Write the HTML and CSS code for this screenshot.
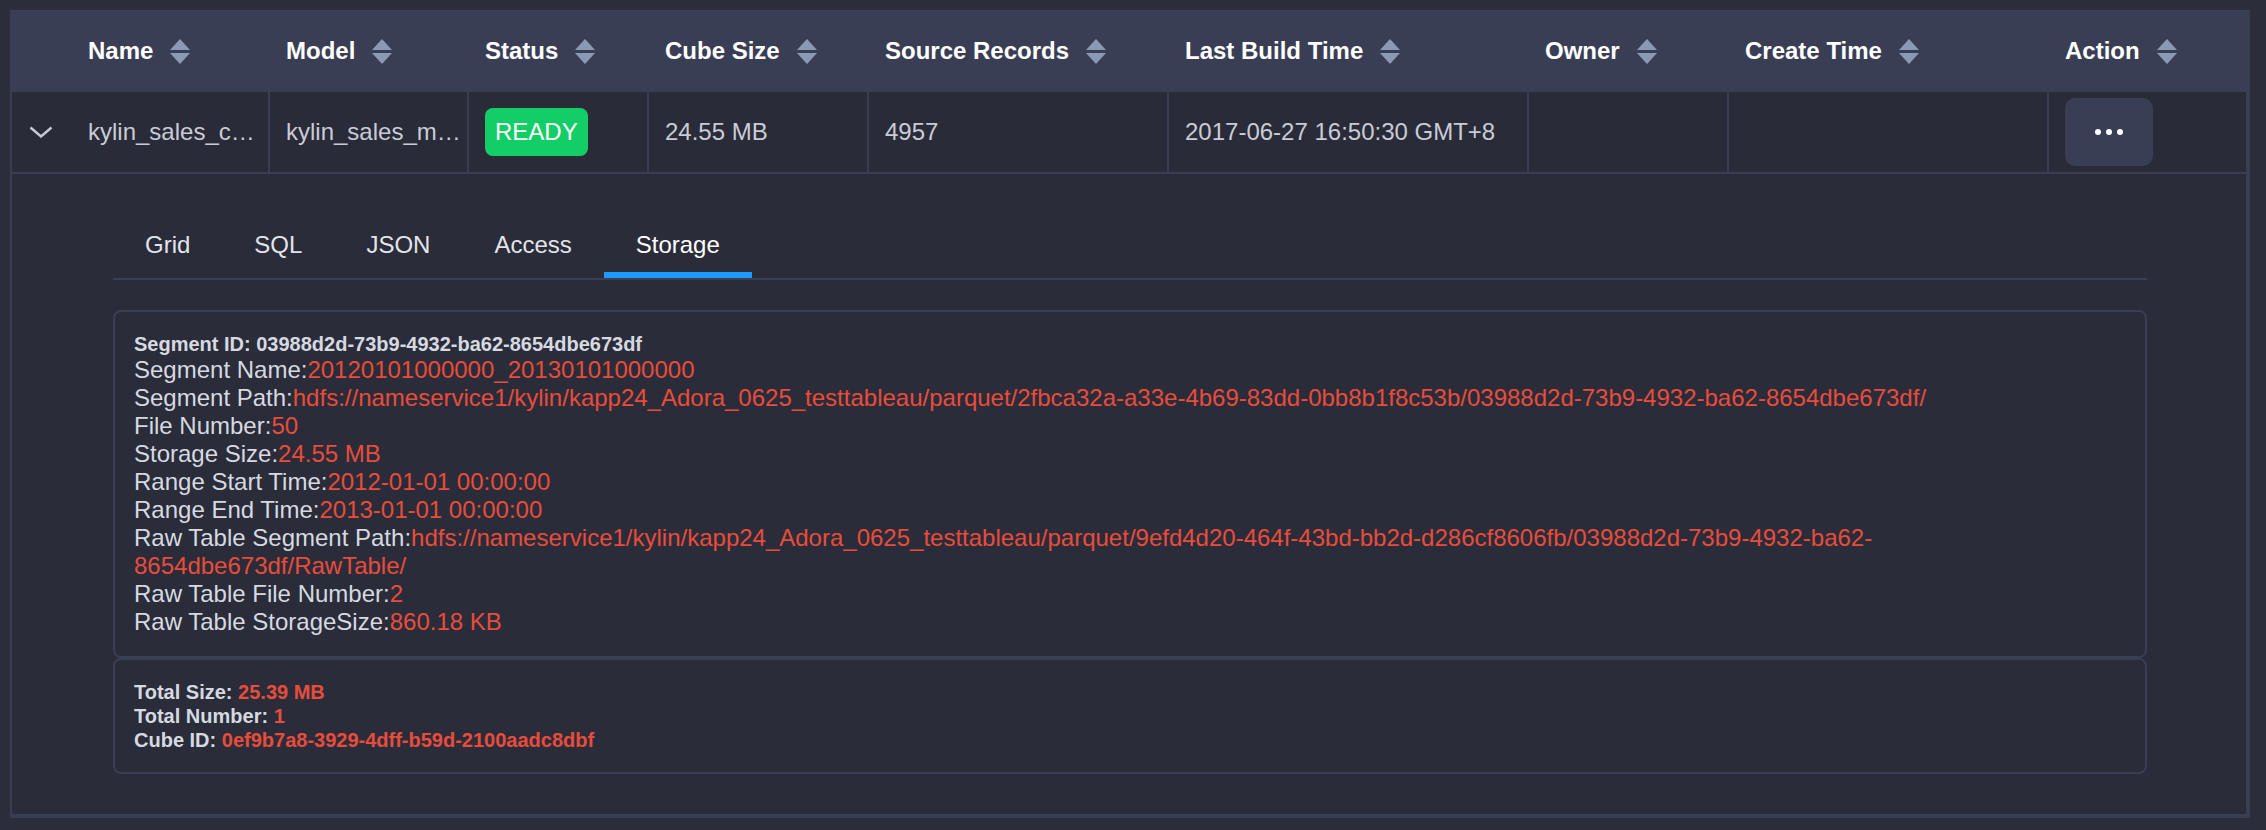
FILE: index.html
```html
<!DOCTYPE html>
<html>
<head>
<meta charset="utf-8">
<title>Cube list</title>
<link rel="stylesheet" href="styles.css">
</head>
<body>
<div class="frame">
  <div class="thead">
    <div class="th th-expand"></div>
    <div class="th">Name <svg class="sort" viewBox="0 0 20 25"><polygon points="0,11 10,0 20,11"/><polygon points="0,14 20,14 10,25"/></svg></div>
    <div class="th">Model <svg class="sort" viewBox="0 0 20 25"><polygon points="0,11 10,0 20,11"/><polygon points="0,14 20,14 10,25"/></svg></div>
    <div class="th">Status <svg class="sort" viewBox="0 0 20 25"><polygon points="0,11 10,0 20,11"/><polygon points="0,14 20,14 10,25"/></svg></div>
    <div class="th">Cube Size <svg class="sort" viewBox="0 0 20 25"><polygon points="0,11 10,0 20,11"/><polygon points="0,14 20,14 10,25"/></svg></div>
    <div class="th">Source Records <svg class="sort" viewBox="0 0 20 25"><polygon points="0,11 10,0 20,11"/><polygon points="0,14 20,14 10,25"/></svg></div>
    <div class="th">Last Build Time <svg class="sort" viewBox="0 0 20 25"><polygon points="0,11 10,0 20,11"/><polygon points="0,14 20,14 10,25"/></svg></div>
    <div class="th">Owner <svg class="sort" viewBox="0 0 20 25"><polygon points="0,11 10,0 20,11"/><polygon points="0,14 20,14 10,25"/></svg></div>
    <div class="th">Create Time <svg class="sort" viewBox="0 0 20 25"><polygon points="0,11 10,0 20,11"/><polygon points="0,14 20,14 10,25"/></svg></div>
    <div class="th">Action <svg class="sort" viewBox="0 0 20 25"><polygon points="0,11 10,0 20,11"/><polygon points="0,14 20,14 10,25"/></svg></div>
  </div>
  <div class="trow">
    <div class="td td-expand"><svg class="chev" viewBox="0 0 24 12"><polyline points="1.5,1.5 12,10.5 22.5,1.5"/></svg></div>
    <div class="td td-name">kylin_sales_c…</div>
    <div class="td">kylin_sales_m…</div>
    <div class="td"><span class="badge">READY</span></div>
    <div class="td">24.55 MB</div>
    <div class="td">4957</div>
    <div class="td">2017-06-27 16:50:30 GMT+8</div>
    <div class="td"></div>
    <div class="td"></div>
    <div class="td"><button class="more"><span class="dot"></span><span class="dot"></span><span class="dot"></span></button></div>
  </div>
  <div class="detail">
    <div class="tabs">
      <div class="tab">Grid</div>
      <div class="tab">SQL</div>
      <div class="tab">JSON</div>
      <div class="tab">Access</div>
      <div class="tab active">Storage</div>
    </div>
    <div class="box seg">
      <div class="seg-id">Segment ID: 03988d2d-73b9-4932-ba62-8654dbe673df</div>
      <div class="line">Segment Name:<span class="val">20120101000000_20130101000000</span></div>
      <div class="line">Segment Path:<span class="val">hdfs://nameservice1/kylin/kapp24_Adora_0625_testtableau/parquet/2fbca32a-a33e-4b69-83dd-0bb8b1f8c53b/03988d2d-73b9-4932-ba62-8654dbe673df/</span></div>
      <div class="line">File Number:<span class="val">50</span></div>
      <div class="line">Storage Size:<span class="val">24.55 MB</span></div>
      <div class="line">Range Start Time:<span class="val">2012-01-01 00:00:00</span></div>
      <div class="line">Range End Time:<span class="val">2013-01-01 00:00:00</span></div>
      <div class="line">Raw Table Segment Path:<span class="val">hdfs://nameservice1/kylin/kapp24_Adora_0625_testtableau/parquet/9efd4d20-464f-43bd-bb2d-d286cf8606fb/03988d2d-73b9-4932-ba62-8654dbe673df/RawTable/</span></div>
      <div class="line">Raw Table File Number:<span class="val">2</span></div>
      <div class="line">Raw Table StorageSize:<span class="val">860.18 KB</span></div>
    </div>
    <div class="box total">
      <div class="tline">Total Size: <span class="val">25.39 MB</span></div>
      <div class="tline">Total Number: <span class="val">1</span></div>
      <div class="tline">Cube ID: <span class="val">0ef9b7a8-3929-4dff-b59d-2100aadc8dbf</span></div>
    </div>
  </div>
</div>
</body>
</html>
```
FILE: styles.css
```css
* { box-sizing: border-box; }

body {
  margin: 0;
  background: #2b2d3a;
  font-family: "Liberation Sans", Arial, Helvetica, sans-serif;
  color: #d3d6de;
}

.frame {
  margin: 10px 0 0 10px;
  width: 2240px;
  border-left: 2px solid #3a3e54;
  border-right: 4px solid #3a3e54;
  border-bottom: 4px solid #3a3e54;
  background: #2a2c39;
}

.thead,
.trow {
  display: grid;
  grid-template-columns: 58px 198px 199px 180px 220px 300px 360px 200px 320px 199px;
}

.thead {
  height: 82px;
  background: #3a3e54;
}

.th {
  display: flex;
  align-items: center;
  gap: 17px;
  padding-left: 18px;
  font-size: 24px;
  font-weight: bold;
  color: #ffffff;
  white-space: nowrap;
}

.th-expand { padding: 0; }

.sort {
  width: 20px;
  height: 25px;
  fill: #8b9ab4;
  flex: none;
}

.trow {
  height: 82px;
  border-bottom: 2px solid #3a3e54;
  background: #292b38;
}

.td {
  display: flex;
  align-items: center;
  padding-left: 16px;
  border-left: 2px solid #3a3e54;
  font-size: 24px;
  color: #c9ccd6;
  white-space: nowrap;
  overflow: hidden;
}

.td-expand {
  border-left: 0;
  padding: 0;
  justify-content: center;
}

.td-name {
  border-left: 0;
  padding-left: 18px;
}

.chev {
  width: 24px;
  height: 12px;
  fill: none;
  stroke: #c7cad3;
  stroke-width: 2.4;
}

.badge {
  display: inline-block;
  height: 48px;
  line-height: 48px;
  padding: 0 10px;
  border-radius: 8px;
  background: #13ce66;
  color: #ffffff;
  font-size: 24px;
}

.more {
  width: 88px;
  height: 68px;
  border: 0;
  border-radius: 10px;
  background: #3a3e54;
  display: flex;
  align-items: center;
  justify-content: center;
  gap: 5px;
  padding: 0;
}

.dot {
  width: 6px;
  height: 6px;
  border-radius: 50%;
  background: #ffffff;
}

.detail {
  padding: 40px 99px 40px 101px;
}

.tabs {
  display: flex;
  border-bottom: 2px solid #3a3e54;
}

.tab {
  height: 64px;
  line-height: 62px;
  padding: 0 32px;
  font-size: 24px;
  color: #e3e5eb;
}

.tab.active {
  box-shadow: inset 0 -6px 0 #1d9bfb;
  color: #ffffff;
}

.box {
  border: 2px solid #3a3e54;
  border-radius: 8px;
  padding: 20px 20px 20px 19px;
}

.seg { margin-top: 30px; }

.seg-id {
  font-size: 20px;
  line-height: 24px;
  font-weight: bold;
  color: #d6d9e0;
}

.line {
  font-size: 24px;
  line-height: 28px;
  color: #d6d9e0;
}

.val { color: #e74c3c; }

.tline {
  font-size: 20px;
  line-height: 24px;
  font-weight: bold;
  color: #d6d9e0;
}
```
